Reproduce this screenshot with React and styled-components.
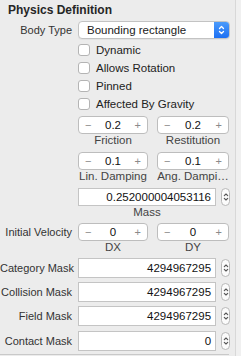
import React from "react"
import styled, { createGlobalStyle } from "styled-components"

const Global = createGlobalStyle`
  html, body {
    margin: 0;
    padding: 0;
    background: #f0f0f0;
  }
  body {
    font-family: "Liberation Sans", Arial, sans-serif;
    font-size: 11px;
    color: #2b2b2b;
  }
`

const Panel = styled.div`
  width: 236px;
  height: 356px;
  box-sizing: border-box;
  background: #ececec;
  border-right: 1px solid #d8d8d8;
  padding: 3px 6px 0 0;
  display: flex;
  flex-direction: column;
  overflow: hidden;
`

const Title = styled.div`
  font-weight: bold;
  font-size: 12px;
  line-height: 14px;
  padding-left: 8px;
  color: #262626;
`

const Row = styled.div`
  display: grid;
  grid-template-columns: 72px 152px;
  column-gap: 6px;
  align-items: center;
  height: ${p => p.h || 18}px;
  margin-top: ${p => p.mt || 0}px;
`

const Label = styled.div`
  text-align: right;
  white-space: nowrap;
  color: #333;
`

const Select = styled.div`
  display: flex;
  height: 18px;
  box-sizing: border-box;
  border: 1px solid #c3c3c3;
  border-radius: 4px;
  background: #fff;
  overflow: hidden;
  box-shadow: 0 1px 0 rgba(0, 0, 0, 0.04);
`

const SelectText = styled.div`
  flex: 1;
  padding-left: 8px;
  line-height: 16px;
  font-size: 11.5px;
  color: #1a1a1a;
`

const SelectArrow = styled.div`
  width: 15px;
  background: linear-gradient(#4b9bfb, #1c6ff3);
  display: flex;
  align-items: center;
  justify-content: center;
`

const Check = styled.label`
  grid-column: 2;
  display: flex;
  align-items: center;
  gap: 6px;
  color: #222;
  font-size: 11.5px;
`

const Box = styled.span`
  width: 12px;
  height: 12px;
  box-sizing: border-box;
  background: #fff;
  border: 1px solid #b4b4b4;
  border-radius: 3px;
`

const Pair = styled.div`
  grid-column: 2;
  display: grid;
  grid-template-columns: 70px 72px;
  column-gap: 9px;
  height: 100%;
`

const Stepper = styled.div`
  display: flex;
  align-items: center;
  justify-content: space-between;
  box-sizing: border-box;
  height: 18px;
  border: 1px solid #bdbdbd;
  border-radius: 4px;
  background: #fff;
  padding: 0 6px;
  color: #8a8a8a;
`

const StepValue = styled.span`
  color: #111;
  font-size: 11.5px;
`

const Caption = styled.div`
  text-align: center;
  color: #444;
  font-size: 11.5px;
  line-height: 13px;
  white-space: nowrap;
  overflow: hidden;
`

const Captions = styled.div`
  display: grid;
  grid-template-columns: 70px 72px;
  column-gap: 9px;
  margin-left: 78px;
  height: 13px;
`

const FieldWrap = styled.div`
  grid-column: 2;
  display: flex;
  align-items: center;
  gap: 5px;
`

const Field = styled.div`
  width: ${p => p.w || 138}px;
  height: ${p => p.h || 18}px;
  box-sizing: border-box;
  background: #fff;
  border: 1px solid #c4c4c4;
  text-align: right;
  padding-right: 4px;
  line-height: ${p => (p.h || 18) - 2}px;
  color: #111;
  font-size: 11.5px;
`

const MiniStep = styled.div`
  width: 9px;
  height: 18px;
  box-sizing: border-box;
  border: 1px solid #b8b8b8;
  border-radius: 5px;
  background: #fbfbfb;
  display: flex;
  align-items: center;
  justify-content: center;
`

const MassCaption = styled.div`
  margin-left: 78px;
  width: 138px;
  text-align: center;
  color: #444;
  font-size: 11.5px;
  line-height: 13px;
`

const Divider = styled.div`
  margin-top: 3px;
  height: 1px;
  width: 229px;
  background: #c9c9c9;
`

const UpDown = ({ color = "#fff", w = 7, h = 10 }) => (
  <svg width={w} height={h} viewBox="0 0 7 10" fill="none" stroke={color} strokeWidth="1.3" strokeLinecap="round" strokeLinejoin="round">
    <path d="M1.5 3.5 L3.5 1.5 L5.5 3.5" />
    <path d="M1.5 6.5 L3.5 8.5 L5.5 6.5" />
  </svg>
)

const StepBox = ({ value }) => (
  <Stepper>
    <span>−</span>
    <StepValue>{value}</StepValue>
    <span>+</span>
  </Stepper>
)

const MaskRow = ({ label, value, mt }) => (
  <Row h={20} mt={mt}>
    <Label>{label}</Label>
    <FieldWrap>
      <Field w={139} h={20}>{value}</Field>
      <MiniStep><UpDown color="#555" w={6} h={12} /></MiniStep>
    </FieldWrap>
  </Row>
)

export default function App() {
  return (
    <>
      <Global />
      <Panel>
        <Title>Physics Definition</Title>
        <Row mt={4}>
          <Label>Body Type</Label>
          <Select>
            <SelectText>Bounding rectangle</SelectText>
            <SelectArrow><UpDown /></SelectArrow>
          </Select>
        </Row>
        {["Dynamic", "Allows Rotation", "Pinned", "Affected By Gravity"].map((t, i) => (
          <Row key={t} mt={i === 0 ? 2 : 0}>
            <Check><Box />{t}</Check>
          </Row>
        ))}
        <Row mt={3}>
          <Pair>
            <StepBox value="0.2" />
            <StepBox value="0.2" />
          </Pair>
        </Row>
        <Captions>
          <Caption>Friction</Caption>
          <Caption>Restitution</Caption>
        </Captions>
        <Row mt={5}>
          <Pair>
            <StepBox value="0.1" />
            <StepBox value="0.1" />
          </Pair>
        </Row>
        <Captions>
          <Caption>Lin. Damping</Caption>
          <Caption>Ang. Dampi…</Caption>
        </Captions>
        <Row mt={5}>
          <FieldWrap>
            <Field>0.252000004053116</Field>
            <MiniStep><UpDown color="#555" w={6} h={12} /></MiniStep>
          </FieldWrap>
        </Row>
        <MassCaption>Mass</MassCaption>
        <Row mt={4}>
          <Label>Initial Velocity</Label>
          <Pair>
            <StepBox value="0" />
            <StepBox value="0" />
          </Pair>
        </Row>
        <Captions>
          <Caption>DX</Caption>
          <Caption>DY</Caption>
        </Captions>
        <MaskRow label="Category Mask" value="4294967295" mt={4} />
        <MaskRow label="Collision Mask" value="4294967295" mt={4} />
        <MaskRow label="Field Mask" value="4294967295" mt={4} />
        <MaskRow label="Contact Mask" value="0" mt={5} />
        <Divider />
      </Panel>
    </>
  )
}
